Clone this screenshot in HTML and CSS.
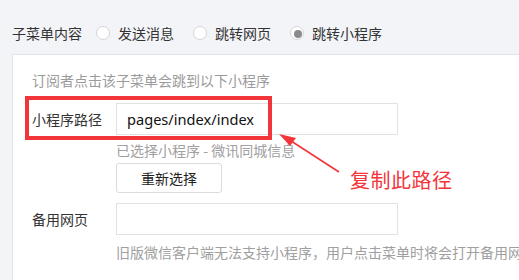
FILE: index.html
```html
<!DOCTYPE html>
<html lang="zh">
<head>
<meta charset="utf-8">
<link rel="stylesheet" href="styles.css">
</head>
<body>
<div class="top">
  <span class="top-label">子菜单内容</span>
  <label class="radio"><span class="dot"></span>发送消息</label>
  <label class="radio"><span class="dot"></span>跳转网页</label>
  <label class="radio checked"><span class="dot"></span>跳转小程序</label>
</div>
<div class="panel">
  <div class="intro">订阅者点击该子菜单会跳到以下小程序</div>
  <div class="row first">
    <div class="label">小程序路径</div>
    <div class="input big">pages/index/index</div>
  </div>
  <div class="hint">已选择小程序 - 微讯同城信息</div>
  <div class="btn">重新选择</div>
  <div class="row second">
    <div class="label">备用网页</div>
    <div class="input"></div>
  </div>
  <div class="hint hint2">旧版微信客户端无法支持小程序，用户点击菜单时将会打开备用网页。</div>
</div>
<div class="redbox"></div>
<svg class="arrow" width="519" height="280" viewBox="0 0 519 280">
  <line x1="339" y1="172" x2="288" y2="139" stroke="#f2353a" stroke-width="1.6"/>
  <polygon points="279,134 296,138 290,146" fill="#f2353a"/>
</svg>
<div class="note">复制此路径</div>
</body>
</html>
```
FILE: styles.css
```css
html, body {
  margin: 0;
  padding: 0;
}
body {
  width: 519px;
  height: 280px;
  overflow: hidden;
  background: #f3f4f8;
  font-family: "Noto Sans CJK SC", "Microsoft YaHei", sans-serif;
  font-size: 14px;
  color: #333;
  position: relative;
}
.top {
  display: flex;
  align-items: center;
  height: 22px;
  margin-top: 22px;
  padding-left: 12px;
  line-height: 22px;
  white-space: nowrap;
}
.top-label {
  margin-right: 14px;
}
.radio {
  display: flex;
  align-items: center;
  margin-right: 19px;
}
.dot {
  width: 12px;
  height: 12px;
  border: 1px solid #d4d4d8;
  border-radius: 50%;
  background: #fff;
  margin-right: 8px;
  position: relative;
  box-sizing: content-box;
}
.checked .dot::after {
  content: "";
  position: absolute;
  left: 3px;
  top: 3px;
  width: 8px;
  height: 8px;
  border-radius: 50%;
  background: #8a8a8a;
}
.panel {
  margin-top: 10px;
  margin-left: 12px;
  background: #fff;
  border: 1px solid #e3e4e8;
  border-right: none;
  padding: 15px 0 30px 19px;
  white-space: nowrap;
  overflow: hidden;
}
.intro {
  line-height: 20px;
  color: #9b9b9b;
}
.row {
  display: flex;
  align-items: center;
}
.row.first {
  margin-top: 13px;
}
.row.second {
  margin-top: 10px;
}
.label {
  width: 84px;
  line-height: 20px;
  color: #333;
}
.input {
  width: 270px;
  height: 30px;
  border: 1px solid #e2e2e2;
  box-sizing: content-box;
  padding-left: 10px;
  line-height: 30px;
}
.input.big {
  font-family: "Noto Sans", "Noto Sans CJK SC", sans-serif;
  font-size: 14.6px;
  color: #111;
}
.hint {
  margin-left: 84px;
  margin-top: 5px;
  line-height: 20px;
  color: #a0a0a0;
}
.hint2 {
  margin-top: 7px;
}
.btn {
  margin-left: 84px;
  margin-top: 3px;
  width: 104px;
  height: 28px;
  border: 1px solid #dcdcdc;
  border-radius: 3px;
  text-align: center;
  line-height: 28px;
  color: #222;
}
.redbox {
  position: absolute;
  left: 25px;
  top: 96px;
  width: 239px;
  height: 36px;
  border: 4px solid #f2353a;
}
.arrow {
  position: absolute;
  left: 0;
  top: 0;
}
.note {
  position: absolute;
  left: 350px;
  top: 166px;
  font-size: 20px;
  line-height: 28px;
  color: #f2353a;
  letter-spacing: 0.5px;
}
```
